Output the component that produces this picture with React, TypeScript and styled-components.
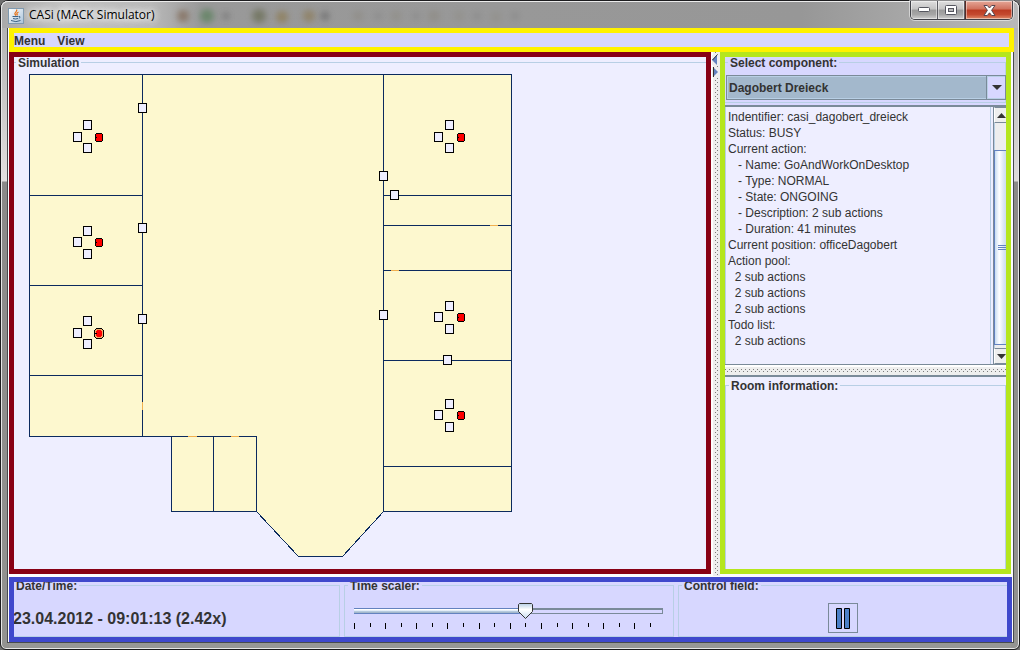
import React, { useState } from "react";
import styled, { createGlobalStyle, css } from "styled-components";

const color = {
  ink: "#333333",
  pane: "#eeeeff",
  bar: "#d7d7ff",
  edge: "#7a8a99",
  softEdge: "#b8cfe5",
  accent: "#6382bf",
  wall: "#0b2a5e",
  room: "#fdf8cf",
  door: "#f0b050",
};

const GlobalStyle = createGlobalStyle`
  * { box-sizing: border-box; }
  body {
    margin: 0;
    background: #6e6e6e;
    color: ${color.ink};
    font: 12px/16px "Liberation Sans", Arial, sans-serif;
  }
`;

const Window = styled.div`
  display: flex;
  flex-direction: column;
  min-height: 100vh;
  padding: 0 5px 6px 6px;
  border: 1px solid #1c1c1e;
  border-radius: 8px 8px 6px 6px;
  background:
    linear-gradient(to bottom, #b4b4b4 28px, #e2dfdf 180px, #8b8989 181px, #939391 100%) left / 8px 100% no-repeat,
    linear-gradient(to bottom, #b4b4b4 28px, #dddada 180px, #8b8989 181px, #939391 100%) right / 8px 100% no-repeat,
    #979795;
  box-shadow: inset 0 0 0 1px #e6e6e6;
`;

const TitleBar = styled.header`
  display: flex;
  align-items: center;
  position: relative;
  height: 27px;
  margin: 0 -5px 0 -6px;
  padding: 0 6px 0 7px;
  border-radius: 7px 7px 0 0;
  background: linear-gradient(to right, #a9a9a9, #c2c2c2 60px, #b9b9b9 150px, #999999 200px, #979797 800px, #a6a6a6 900px, #b9b9b9);
  box-shadow: inset 0 1px 0 #ececec, inset 1px 0 0 #e6e6e6, inset -1px 0 0 #e6e6e6;
`;

const GlassShapes = styled.svg`
  position: absolute;
  left: 0;
  top: 1px;
  pointer-events: none;
`;

const AppTitle = styled.h1`
  position: relative;
  flex: 1;
  margin: 1px 0 0 5px;
  color: #000;
  font: 12px/16px "Open Sans", "Noto Sans", sans-serif;
  text-shadow: 0 0 6px #fff, 0 0 8px #fff, 0 0 10px #fff;
`;

const AppIcon = styled.svg`
  position: relative;
  margin-top: 2px;
`;

const CaptionButtons = styled.div`
  display: flex;
  align-self: flex-start;
  position: relative;
  height: 19px;
  border: 1px solid #3f4046;
  border-top: 0;
  border-radius: 0 0 5px 5px;
  overflow: hidden;
  box-shadow: 0 0 0 1px rgba(255, 255, 255, 0.5);
`;

const CaptionButton = styled.button<{ $close?: boolean }>`
  display: grid;
  place-items: center;
  width: ${(p) => (p.$close ? 47 : 27)}px;
  padding: 0;
  border: 0;
  border-left: ${(p) => (p.$close ? "1px solid #5a2a24" : "0")};
  border-right: ${(p) => (p.$close ? "0" : "1px solid #5b5c62")};
  background: ${(p) =>
    p.$close
      ? "linear-gradient(#e5a797, #d0705c 45%, #bb3a22 50%, #c4492f 75%, #e08a68)"
      : "linear-gradient(#dedede, #c4c4c4 45%, #9a9a9a 50%, #a6a6a6 75%, #cfcfcf)"};
  box-shadow: inset 0 0 0 1px rgba(255, 255, 255, 0.45);
`;

const Client = styled.div`
  display: flex;
  flex: 1;
  flex-direction: column;
  border: 1px solid #474a4d;
  border-top: 0;
  padding-left: 1px;
  background: #fbfbff;
`;

const MenuBar = styled.nav`
  display: flex;
  gap: 12px;
  height: 24px;
  margin-right: -1px;
  border: 5px solid #fff200;
  background: ${color.bar};
`;

const MenuItem = styled.button`
  padding: 1px 0 0;
  border: 0;
  background: none;
  color: ${color.ink};
  font: bold 12px/14px "Liberation Sans", Arial, sans-serif;
`;

const Main = styled.main`
  display: flex;
  flex: 1;
  padding-right: 2px;
`;

const Framed = styled.section<{ $frame: string; $bg: string }>`
  display: flex;
  flex-direction: column;
  min-width: 0;
  border: 5px solid ${(p) => p.$frame};
  background: ${(p) => p.$bg};
  overflow: hidden;
`;

const SimulationPane = styled(Framed)`
  flex: 1;
`;

const SidePane = styled(Framed)`
  flex: 0 0 291px;
`;

const StatusBar = styled(Framed)`
  height: 65px;
  margin: 3px 1px 0 0;
`;

const StatusColumns = styled.div`
  display: grid;
  flex: 1 0 auto;
  grid-template-columns: repeat(3, minmax(0, 1fr));
  gap: 4px;
  margin: -5px -1px 0 -4px;
`;

const Group = styled.fieldset`
  min-width: 0;
  margin: 0;
  padding: 0;
  border: 1px solid ${color.softEdge};
`;

const GroupTitle = styled.legend`
  margin-left: 3px;
  padding: 2px 2px 0;
  font-weight: bold;
  line-height: 15px;
`;

const SimulationGroup = styled(Group)`
  flex: 1;
  margin: -3px -3px -3px -2px;
`;

const Plan = styled.svg`
  display: block;
  margin: 3px 0 0 16px;
`;

const rowDots = css`
  background-color: #eeeeee;
  background-image:
    conic-gradient(from 270deg at 1px 1px, #7c7c7c 90deg, transparent 0),
    conic-gradient(from 270deg at 1px 1px, #7c7c7c 90deg, transparent 0);
  background-size: 4px 4px;
`;

const VerticalSplitter = styled.div`
  ${rowDots}
  display: flex;
  flex: 0 0 9px;
  flex-direction: column;
  align-items: flex-start;
  gap: 2px;
  padding: 3px 0 0 1px;
  margin-bottom: -2px;
  background-repeat: repeat-y;
  background-position: 2px 0, 4px 2px;
  border-left: 2px solid #ffffff;
`;

const CollapseButton = styled.button`
  display: block;
  width: 6px;
  height: 10px;
  margin-left: -2px;
  padding: 0;
  border: 0;
  background: #eeeeee;
  line-height: 0;
`;

const HorizontalSplitter = styled.div`
  ${rowDots}
  height: 10px;
  border-top: 2px solid #ffffff;
  background-repeat: repeat-x;
  background-position: 0 2px, 2px 4px;
`;

const SelectGroup = styled(Group)`
  height: 49px;
  margin: -3px 0 2px -1px;
`;

const ComboBox = styled.div`
  display: flex;
  height: 25px;
  margin: 4px -1px 0 1px;
  border: 1px solid ${color.edge};
  background: ${color.bar};
`;

const ComboSelect = styled.select`
  flex: 1;
  min-width: 0;
  padding: 0 1px;
  appearance: none;
  border: 1px solid ${color.softEdge};
  border-radius: 0;
  background: #a3b8cc;
  color: ${color.ink};
  font: bold 12px/16px "Liberation Sans", Arial, sans-serif;
`;

const ComboArrow = styled.span`
  display: grid;
  place-items: center;
  width: 18px;
  border: 1px solid ${color.softEdge};
  border-width: 1px 0 1px 1px;
  box-shadow: -1px 0 0 ${color.edge};
`;

const Details = styled.div`
  display: flex;
  flex: 0 0 260px;
  margin-right: -4px;
  border-top: 2px solid ${color.edge};
  border-bottom: 1px solid ${color.edge};
  background: ${color.pane};
`;

const DetailText = styled.textarea`
  flex: 1;
  min-width: 0;
  margin-right: 2px;
  padding: 2px;
  border: 0;
  border-left: 1px solid ${color.softEdge};
  border-right: 1px solid ${color.softEdge};
  background: ${color.pane};
  color: ${color.ink};
  font: 12px/16px "Liberation Sans", Arial, sans-serif;
  outline: 0;
  overflow: hidden;
  resize: none;
`;

const ScrollBar = styled.div`
  display: flex;
  flex-direction: column;
  width: 17px;
  border-left: 1px solid ${color.edge};
  background: #eeeeee;
`;

const ScrollButton = styled.button`
  display: flex;
  align-items: center;
  height: 16px;
  padding: 0 2px;
  border: 1px solid ${color.edge};
  border-left-color: #ffffff;
  background: #eeeeee;
`;

const ScrollTrack = styled.div`
  flex: 1;
  padding: 27px 0 3px;
  border-left: 1px solid ${color.softEdge};
`;

const ScrollThumb = styled.div`
  display: grid;
  place-items: center;
  height: 100%;
  margin-left: -1px;
  border: 1px solid ${color.accent};
  background: linear-gradient(to right, #c8ddf2, #ffffff 30%, #dde8f3 60%, #b8cfe5);
`;

const RoomArea = styled.div`
  display: flex;
  flex: 1;
  flex-direction: column;
  border-top: 2px solid ${color.edge};
  background: ${color.pane};
`;

const RoomGroup = styled(Group)`
  flex: 1;
  margin-bottom: -2px;
`;

const DateTime = styled.output`
  display: block;
  margin: 15px 0 0 2px;
  font: bold 16px/20px "Liberation Sans", Arial, sans-serif;
  white-space: nowrap;
`;

const SliderBox = styled.div`
  position: relative;
  margin: 9px 10px 0 9px;
`;

const Slider = styled.input<{ $fill: number }>`
  display: block;
  width: 100%;
  height: 16px;
  margin: 0;
  appearance: none;
  background: none;

  &::-webkit-slider-runnable-track {
    height: 6px;
    background:
      linear-gradient(${color.accent} 0 1px, #ffffff 1px 2px, #c8dcf0 3px, #a3b8cc 4px 5px, ${color.accent} 5px)
        left / ${(p) => p.$fill}% 100% no-repeat,
      linear-gradient(${color.edge}, ${color.edge}) right / 1px 100% no-repeat,
      linear-gradient(${color.edge} 0 2px, ${color.bar} 2px 5px, ${color.edge} 5px);
  }

  &::-webkit-slider-thumb {
    appearance: none;
    width: 15px;
    height: 16px;
    margin-top: -5px;
    background: transparent;
  }
`;

const SliderThumb = styled.svg`
  position: absolute;
  top: 0;
  pointer-events: none;
`;

const Ticks = styled.div`
  display: flex;
  justify-content: space-between;
  margin: 4px 12px 0 0;
`;

const Tick = styled.i<{ $major: boolean }>`
  width: 1px;
  height: ${(p) => (p.$major ? 6 : 4)}px;
  background: #000;
`;

const Controls = styled.div`
  display: flex;
  justify-content: center;
  padding-top: 9px;
`;

const PauseButton = styled.button`
  display: grid;
  place-items: center;
  width: 30px;
  height: 30px;
  padding: 0;
  border: 1px solid ${color.edge};
  background: ${color.bar};
`;

const outline = "M29 74H511V511H383L342 556H298L256 511H171V436H29Z";
const innerWalls =
  "M142 74V436M29 195H142M29 285H142M29 375H142M383 74V511M383 195H511M383 225H511M383 270H511M383 360H511M383 466H511M171 436H256V511M213 436V511";
const doors =
  "M142 401.5V409.5M187.5 436H196.5M230.5 436H238.5M489.5 225H497.5M390.5 270H398.5";

const sensors: [number, number][] = [
  [138, 103], [138, 223], [138, 314], [379, 171], [390, 190], [379, 310], [443, 355],
];

interface Desk {
  x: number;
  y: number;
  side: [number, number];
  person: number;
  selected?: boolean;
}

const desks: Desk[] = [
  { x: 83, y: 120, side: [73, 132], person: 133 },
  { x: 83, y: 226, side: [73, 237], person: 238 },
  { x: 83, y: 316, side: [73, 328], person: 329, selected: true },
  { x: 445, y: 120, side: [434, 132], person: 133 },
  { x: 445, y: 301, side: [434, 312], person: 313 },
  { x: 445, y: 399, side: [434, 410], person: 411 },
];

function Sensor({ x, y }: { x: number; y: number }) {
  return <rect x={x} y={y} width="8" height="9" fill={color.pane} stroke="#000" />;
}

function Person({ x, y, selected }: { x: number; y: number; selected?: boolean }) {
  return (
    <g transform={`translate(${x} ${y})`}>
      {selected ? (
        <>
          <path d="M1 -1H6L8 1V7L6 9H1L-1 7V1Z" fill="#f4a868" stroke="#000" />
          <path d="M1.5 .5H5.5V1.5H6.5V6.5H5.5V7.5H1.5V6.5H.5V1.5H1.5Z" fill="#f00" />
        </>
      ) : (
        <path d="M1 0H6L7 1V7L6 8H1L0 7V1Z" fill="#f00" stroke="#000" />
      )}
      <path d="M-1 4H1" stroke="#000" />
    </g>
  );
}

function FloorPlan() {
  return (
    <Plan width="484" height="484" viewBox="28.5 73.5 484 484" role="img" aria-label="Floor plan" shapeRendering="crispEdges">
      <path d={outline} fill={color.room} stroke={color.wall} />
      <path d={innerWalls} fill="none" stroke={color.wall} />
      <path d={doors} stroke={color.door} />
      {sensors.map(([x, y]) => (
        <Sensor key={`${x}-${y}`} x={x} y={y} />
      ))}
      {desks.map((d) => (
        <g key={`${d.x}-${d.y}`}>
          <Sensor x={d.x} y={d.y} />
          <Sensor x={d.side[0]} y={d.side[1]} />
          <Sensor x={d.x} y={d.y + 23} />
          <Person x={d.x + 12} y={d.person} selected={d.selected} />
        </g>
      ))}
    </Plan>
  );
}

const smudges: [number, number, number, string][] = [
  [182, 14, 6, "#76583f"], [206, 14, 7, "#4c7a4e"], [225, 14, 3, "#555"],
  [258, 14, 7, "#5f6444"], [281, 15, 6, "#8a733f"], [308, 14, 6, "#8a7448"], [324, 14, 4, "#555"],
  [357, 14, 5, "#888378"], [377, 14, 3, "#6f6f6f"], [395, 14, 5, "#8a867a"], [415, 14, 3, "#6f6f6f"],
  [433, 14, 6, "#888378"], [458, 14, 5, "#8d8a80"], [476, 14, 3, "#6f6f6f"], [495, 15, 5, "#8d8a80"], [514, 14, 3, "#6f6f6f"],
];

const details = `Indentifier: casi_dagobert_dreieck
Status: BUSY
Current action:
   - Name: GoAndWorkOnDesktop
   - Type: NORMAL
   - State: ONGOING
   - Description: 2 sub actions
   - Duration: 41 minutes
Current position: officeDagobert
Action pool:
  2 sub actions
  2 sub actions
  2 sub actions
Todo list:
  2 sub actions`;

const SCALE_MAX = 19.7;

function TimeScaler() {
  const [value, setValue] = useState(11);
  const ratio = value / SCALE_MAX;
  return (
    <Group>
      <GroupTitle>Time scaler:</GroupTitle>
      <SliderBox>
        <Slider
          type="range"
          aria-label="Time scaler"
          min={0}
          max={SCALE_MAX}
          step={0.1}
          value={value}
          $fill={ratio * 100}
          onChange={(e) => setValue(Number(e.target.value))}
        />
        <SliderThumb width="15" height="16" viewBox="0 0 15 16" style={{ left: `calc((100% - 15px) * ${ratio})` }}>
          <defs>
            <linearGradient id="thumb" x1="0" y1="0" x2="0" y2="1">
              <stop offset="0" stopColor="#b8cfe5" />
              <stop offset="0.4" stopColor="#fff" />
              <stop offset="1" stopColor="#c8dcf0" />
            </linearGradient>
          </defs>
          <path d="M1.5 .5H13.5L14.5 1.5V8.5L7.5 15.5L.5 8.5V1.5Z" fill="url(#thumb)" stroke="#333" />
        </SliderThumb>
        <Ticks aria-hidden="true">
          {Array.from({ length: 20 }, (_, i) => (
            <Tick key={i} $major={i % 2 === 0} />
          ))}
        </Ticks>
      </SliderBox>
    </Group>
  );
}

export default function App() {
  return (
    <>
      <GlobalStyle />
      <Window>
        <TitleBar>
          <GlassShapes width="540" height="26" aria-hidden="true">
            <filter id="glass" x="-1" y="-1" width="3" height="3">
              <feGaussianBlur stdDeviation="3" />
            </filter>
            {smudges.map(([x, y, r, fill]) => (
              <circle key={x} cx={x} cy={y} r={r} fill={fill} opacity={x < 340 ? 0.6 : 0.45} filter="url(#glass)" />
            ))}
          </GlassShapes>
          <AppIcon width="16" height="16" viewBox="0 0 16 16" aria-hidden="true">
            <defs>
              <linearGradient id="tile" x1="0" y1="0" x2="1" y2="1">
                <stop offset="0" stopColor="#fff" />
                <stop offset="1" stopColor="#a9c3da" />
              </linearGradient>
            </defs>
            <rect x=".5" y=".5" width="15" height="15" fill="url(#tile)" stroke="#7f99ae" />
            <path d="M8.5 1.5C10 3.5 6 4.5 7 6.2L8 7.5M10.5 4C8.5 5 8.5 5.8 9.5 7.3" fill="none" stroke="#e8751a" strokeWidth="1.3" />
            <path d="M4.5 8.5H10.5M5 10.5Q7.5 11.5 10 10.5M3 12.5Q8 14.8 12.5 12.5M11 8.5Q13.5 8.5 10.8 10.6" fill="none" stroke="#3e6485" />
          </AppIcon>
          <AppTitle>CASi (MACK Simulator)</AppTitle>
          <CaptionButtons>
            <CaptionButton aria-label="Minimize">
              <svg width="13" height="6" viewBox="0 0 13 6">
                <rect x=".5" y=".5" width="11" height="4" rx="1" fill="#fff" stroke="#55565f" />
              </svg>
            </CaptionButton>
            <CaptionButton aria-label="Maximize">
              <svg width="12" height="10" viewBox="0 0 12 10">
                <rect x=".5" y=".5" width="11" height="9" rx="1" fill="#fff" stroke="#55565f" />
                <rect x="3.5" y="3.5" width="5" height="3" fill="#bbb" stroke="#55565f" />
              </svg>
            </CaptionButton>
            <CaptionButton $close aria-label="Close">
              <svg width="13" height="11" viewBox="0 0 13 11">
                <path d="M1 .5H4.3L6.5 3L8.7 .5H12L8.6 5.3L12 10.5H8.7L6.5 7.8L4.3 10.5H1L4.4 5.3Z" fill="#fff" stroke="#55464f" />
              </svg>
            </CaptionButton>
          </CaptionButtons>
        </TitleBar>
        <Client>
          <MenuBar>
            <MenuItem>Menu</MenuItem>
            <MenuItem>View</MenuItem>
          </MenuBar>
          <Main>
            <SimulationPane $frame="#880015" $bg={color.pane}>
              <SimulationGroup>
                <GroupTitle>Simulation</GroupTitle>
                <FloorPlan />
              </SimulationGroup>
            </SimulationPane>
            <VerticalSplitter>
              <CollapseButton aria-label="Collapse left">
                <svg width="6" height="10" viewBox="0 0 6 10">
                  <path d="M5 0V10L0 5Z" fill="#6382bf" />
                  <path d="M5 0L0.5 5" stroke="#333" />
                </svg>
              </CollapseButton>
              <CollapseButton aria-label="Collapse right">
                <svg width="6" height="10" viewBox="0 0 6 10">
                  <path d="M1 0V10L6 5Z" fill="#6382bf" />
                  <path d="M1.5 0V10" stroke="#333" />
                </svg>
              </CollapseButton>
            </VerticalSplitter>
            <SidePane $frame="#b5e61d" $bg={color.bar}>
              <SelectGroup>
                <GroupTitle>Select component:</GroupTitle>
                <ComboBox>
                  <ComboSelect aria-label="Select component" defaultValue="Dagobert Dreieck">
                    <option>Dagobert Dreieck</option>
                  </ComboSelect>
                  <ComboArrow aria-hidden="true">
                    <svg width="10" height="5" viewBox="0 0 10 5">
                      <path d="M0 0H10L5 5Z" fill="#333" />
                    </svg>
                  </ComboArrow>
                </ComboBox>
              </SelectGroup>
              <Details>
                <DetailText readOnly aria-label="Component details" value={details} />
                <ScrollBar>
                  <ScrollButton aria-label="Scroll up">
                    <svg width="9" height="5" viewBox="0 0 9 5">
                      <path d="M0 5H9L4.5 0Z" fill="#333" />
                    </svg>
                  </ScrollButton>
                  <ScrollTrack>
                    <ScrollThumb>
                      <svg width="9" height="6" viewBox="0 0 9 6" shapeRendering="crispEdges">
                        <path d="M0 .5H9M0 2.5H9M0 4.5H9" stroke={color.accent} />
                      </svg>
                    </ScrollThumb>
                  </ScrollTrack>
                  <ScrollButton aria-label="Scroll down">
                    <svg width="9" height="5" viewBox="0 0 9 5">
                      <path d="M0 0H9L4.5 5Z" fill="#333" />
                    </svg>
                  </ScrollButton>
                </ScrollBar>
              </Details>
              <HorizontalSplitter />
              <RoomArea>
                <RoomGroup>
                  <GroupTitle>Room information:</GroupTitle>
                </RoomGroup>
              </RoomArea>
            </SidePane>
          </Main>
          <StatusBar $frame="#3f48cc" $bg={color.bar}>
            <StatusColumns>
              <Group>
                <GroupTitle>Date/Time:</GroupTitle>
                <DateTime>23.04.2012 - 09:01:13 (2.42x)</DateTime>
              </Group>
              <TimeScaler />
              <Group>
                <GroupTitle>Control field:</GroupTitle>
                <Controls>
                  <PauseButton aria-label="Pause">
                    <svg width="14" height="21" viewBox="0 0 14 21">
                      <path d="M.5 .5H5.5V20.5H.5ZM8.5 .5H13.5V20.5H8.5Z" fill="#4b80c8" stroke="#000" />
                    </svg>
                  </PauseButton>
                </Controls>
              </Group>
            </StatusColumns>
          </StatusBar>
        </Client>
      </Window>
    </>
  );
}
